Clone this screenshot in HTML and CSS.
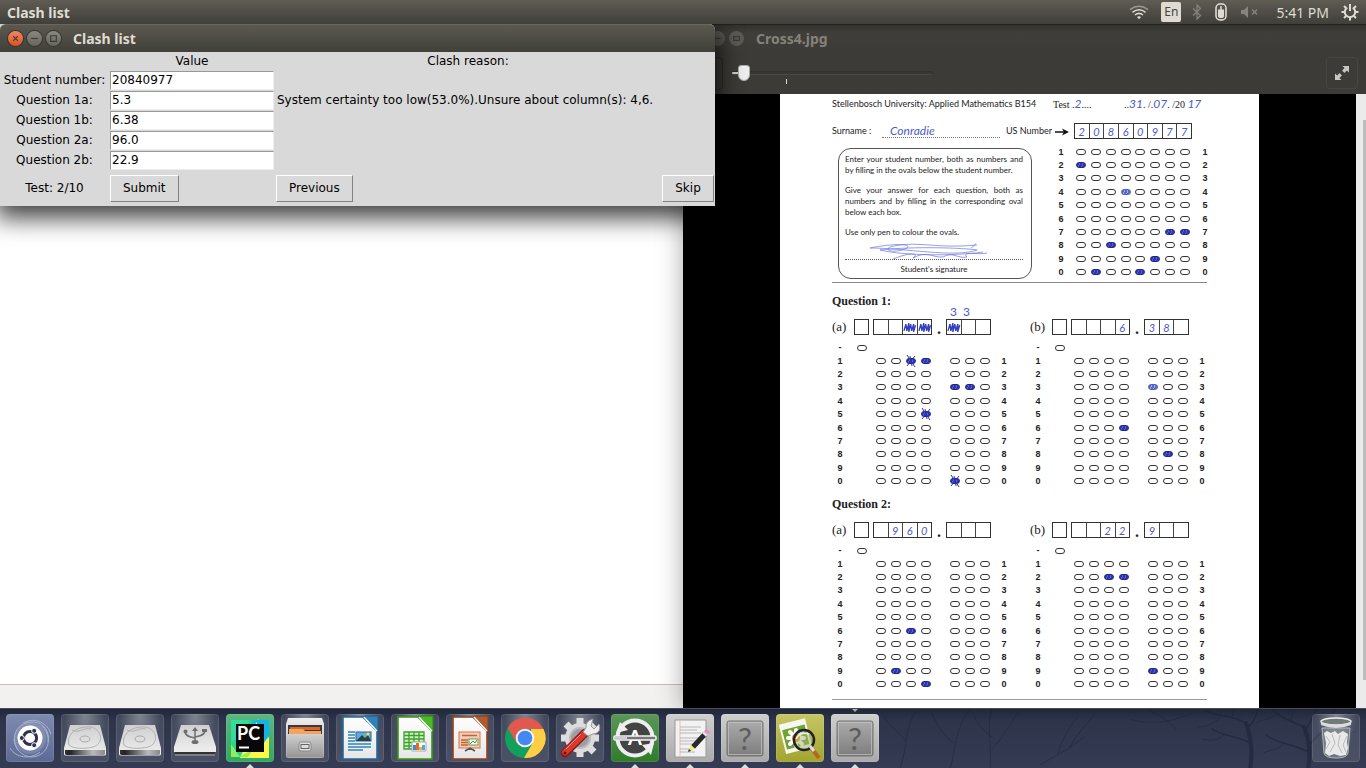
FILE: index.html
```
<!DOCTYPE html>
<html lang="en">
<head>
<meta charset="utf-8">
<title>Clash list</title>
<link rel="stylesheet" href="styles.css">
</head>
<body>
<header class="panel">
  <span class="panel-title">Clash list</span>
  <div class="indicators">
    <svg class="ind-wifi" width="20" height="16" viewBox="0 0 20 16" fill="none" stroke="#dfdbd2" stroke-width="1.5"><path d="M1 5.6Q10-1 19 5.6" stroke="#9b988f"/><path d="M3.5 8.3Q10 3.3 16.500 8.300M6 11Q10 7.700 14 11"/><path d="M8 13Q10 11.500 12 13L10 15.200Z" fill="#dfdbd2" stroke="none"/></svg>
    <span class="lang">En</span>
    <svg class="ind-bt" width="10" height="16" viewBox="0 0 10 16" fill="none" stroke="#85837b" stroke-width="1.3"><path d="M1 4.500L8.500 11.500L5 15V1L8.500 4.500L1 11.500"/></svg>
    <svg class="ind-mouse" width="12" height="18" viewBox="0 0 12 18"><rect x="1" y="1" width="10" height="16" rx="4" fill="#55534b" stroke="#e6e2da" stroke-width="1.500"/><path d="M3 6.500H9V13Q9 15 6 15T3 13Z" fill="#dfdbd2"/><path d="M6 3V7" stroke="#e6e2da" stroke-width="1.500"/></svg>
    <svg class="ind-vol" width="18" height="12" viewBox="0 0 18 12"><path d="M0 4h3l4-4v12L3 8H0Z" fill="#85837b"/><path d="M11 3.500l5 5M16 3.500l-5 5" stroke="#85837b" stroke-width="1.500"/></svg>
    <time class="clock">5:41 PM</time>
    <svg class="ind-gear" width="18" height="18" viewBox="-9 -9 18 18" fill="none" stroke="#dfdbd2"><path d="M-2.800-4.400A5.200 5.200 0 1 0 2.800-4.400" stroke-width="2"/><path d="M0-8V-1" stroke-width="2"/><path d="M5 0H8.500M-5 0H-8.500M0 5V8.500M3.700 3.700L6 6M-3.700 3.700L-6 6M4-4L6-6M-4-4L-6-6" stroke-width="2"/></svg>
  </div>
</header>

<main class="desktop">
  <section class="backdrop" aria-label="Editor"><div class="backdrop-page"></div><div class="backdrop-status"></div></section>

  <section class="viewer" aria-label="Image viewer">
    <div class="titlebar titlebar-idle">
      <button class="wbtn" aria-label="Close image"><svg viewBox="0 0 16 16"><path d="M5.500 5.500l5 5M10.500 5.500l-5 5"/></svg></button>
      <button class="wbtn" aria-label="Minimize image"><svg viewBox="0 0 16 16"><path d="M4.500 8h7"/></svg></button>
      <button class="wbtn" aria-label="Maximize image"><svg viewBox="0 0 16 16"><path d="M5 6h6v4H5z"/></svg></button>
      <h2>Cross4.jpg</h2>
    </div>
    <div class="toolbar">
      <button class="tool-btn" aria-label="Next"></button>
      <div class="zoom"><input type="range" min="0" max="100" value="3" aria-label="Zoom"></div>
      <button class="tool-btn expand" aria-label="Fullscreen"><svg width="14" height="14" viewBox="0 0 14 14" fill="#c9c6bd"><path d="M7.500 0H14V6.500L11.900 4.400L9.400 6.900L7.100 4.600L9.600 2.100ZM0 7.500V14H6.500L4.400 11.900L6.900 9.400L4.600 7.100L2.100 9.600Z"/></svg></button>
    </div>
    <div class="canvas">
      <article class="sheet">
        <div class="sheet-head">
          <span>Stellenbosch University: Applied Mathematics B154</span>
          <span class="roman">Test .<span class="ink">2</span>....</span>
          <span class="roman">..<span class="ink">31</span>. /.<span class="ink">07</span>. /20 <span class="ink">17</span></span>
        </div>
        <div class="sheet-id">
          <span>Surname :</span>
          <span class="surname"><span class="ink">Conradie</span></span>
          <span class="usnum">US Number <svg width="14" height="8" viewBox="0 0 14 8"><path d="M0 4h9" stroke="#111" stroke-width="1.500"/><path d="M7 0.500L14 4L7 7.500L9 4Z" fill="#111"/></svg></span>
          <div class="cells" data-cells="2,0,8,6,0,9,7,7"></div>
        </div>
        <div class="sheet-info">
          <div class="rules">
            <p>Enter your student number, both as numbers and by filling in the ovals below the student number.</p>
            <p>Give your answer for each question, both as numbers and by filling in the corresponding oval below each box.</p>
            <p>Use only pen to colour the ovals.</p>
            <div class="sign">
              <svg viewBox="0 0 178 20" fill="none" stroke="#6874dc" stroke-width="0.700"><path d="M25 8C55 2 70 5 60 9S38 11 45 7C70 0 90 9 132 5M25 8C60 8 110 18 132 10C120 8 70 6 35 10C60 16 110 16 138 12M48 19C65 12 75 13 68 18C82 10 88 18 98 17C108 11 112 19 122 17C116 11 132 15 142 13M126 8C131 5 130 3 131 4"/></svg>
            </div>
            <p class="sign-label">Student's signature</p>
          </div>
          <div class="ovals id-ovals" data-marks="2:0,4:3l,7:6,7:7,8:2,9:5,0:1,0:4"></div>
        </div>
        <section class="question">
          <h3>Question 1:</h3>
          <div class="parts">
            <div class="part" data-name="(a)" data-int=",,#,#" data-dec="#,," data-marks="1:2x,1:3,3:4,3:5,5:3x,0:4x" data-note="3  3"></div>
            <div class="part" data-name="(b)" data-int=",,,6" data-dec="3,8," data-marks="3:4l,6:3,8:5"></div>
          </div>
        </section>
        <section class="question">
          <h3>Question 2:</h3>
          <div class="parts">
            <div class="part" data-name="(a)" data-int=",9,6,0" data-dec=",," data-marks="6:2,9:1,0:3"></div>
            <div class="part" data-name="(b)" data-int=",,2,2" data-dec="9,," data-marks="2:2,2:3,9:4"></div>
          </div>
        </section>
      </article>
      <div class="scrolltrack"><div class="scrollthumb"></div></div>
    </div>
  </section>

  <form class="clash">
    <div class="titlebar">
      <button type="button" class="wbtn wbtn-close" aria-label="Close"><svg viewBox="0 0 16 16"><path d="M5.500 5.500l5 5M10.500 5.500l-5 5"/></svg></button>
      <button type="button" class="wbtn" aria-label="Minimize"><svg viewBox="0 0 16 16"><path d="M4.500 8h7"/></svg></button>
      <button type="button" class="wbtn" aria-label="Maximize"><svg viewBox="0 0 16 16"><path d="M5 5h6v6H5z"/></svg></button>
      <h1>Clash list</h1>
    </div>
    <div class="clash-grid">
      <span></span><span>Value</span><span>Clash reason:</span><span></span>
      <label for="sn">Student number:</label><input id="sn" type="text" value="20840977"><span></span><span></span>
      <label for="q1a">Question 1a:</label><input id="q1a" type="text" value="5.3"><span class="reason">System certainty too low(53.0%).Unsure about column(s): 4,6.</span><span></span>
      <label for="q1b">Question 1b:</label><input id="q1b" type="text" value="6.38"><span></span><span></span>
      <label for="q2a">Question 2a:</label><input id="q2a" type="text" value="96.0"><span></span><span></span>
      <label for="q2b">Question 2b:</label><input id="q2b" type="text" value="22.9"><span></span><span></span>
      <span>Test: 2/10</span><button type="button" class="tk">Submit</button><button type="button" class="tk">Previous</button><button type="button" class="tk">Skip</button>
    </div>
  </form>
</main>

<nav class="dock" aria-label="Launcher">
  <svg class="trees" viewBox="0 0 486 60" preserveAspectRatio="none" fill="none" stroke="#1d2336" stroke-linecap="round">
    <path stroke-width="4" d="M370 60C373 44 371 28 366 14M428 60C431 44 429 30 424 18"/>
    <path stroke-width="1.500" d="M366 14C352 6 340 8 326 2M367 20C374 12 376 8 378 0M424 18C410 12 400 8 392 0M429 36C440 22 452 16 470 4M425 22C430 14 434 8 436 0M370 34C356 26 344 28 332 20M430 44C412 34 400 36 386 26"/>
    <path stroke-width=".8" d="M20 60C28 36 24 20 36 2M26 32C18 22 10 18 4 8M70 60C76 40 74 22 90 0M74 34C62 26 56 14 52 4M110 60C112 36 106 16 112 0M112 40C124 28 130 14 138 4M112 28C100 20 96 12 94 6M160 56C180 44 190 40 204 28M178 45C182 30 190 16 198 8M190 38C196 26 206 16 214 6M250 10C270 16 290 14 312 4M268 0C280 8 290 12 296 20M340 8C336 14 326 18 318 18M344 26C338 32 330 32 322 30M396 5C388 12 382 10 376 14M404 34C398 42 390 40 384 44M444 22C452 28 464 28 476 22M451 16C450 10 454 6 454 0M410 12C414 6 412 4 414 0M352 7C354 4 352 2 354 0"/>
  </svg>
  <button class="tile t-dash" aria-label="Dash"><svg viewBox="0 0 48 48"><g fill="none" stroke="#a9b2cf" stroke-width="1"><path d="M12 36C3 22 12 7 28 8C38 9 44 18 42 28M36 12C48 24 42 42 26 43C16 43 8 34 8 25M17 9C30 2 42 10 45 20M34 38C24 46 10 44 4 34"/></g><circle cx="24" cy="24" r="16" fill="#a9b2cf" opacity=".3"/><circle cx="24" cy="24" r="12.500" fill="#fff"/><circle cx="24" cy="24" r="6.600" fill="none" stroke="#2b3250" stroke-width="3"/><g fill="#2b3250" stroke="#fff" stroke-width="1"><circle cx="15.800" cy="24" r="2.500"/><circle cx="28.200" cy="16.800" r="2.500"/><circle cx="28.200" cy="31.200" r="2.500"/></g></svg></button>
  <button class="tile" aria-label="Drive"><svg viewBox="0 0 48 48"><g id="drive"><path d="M9 11H39L45 34V40Q45 41.500 43 41.500H5Q3 41.500 3 40V34Z" fill="url(#metal)"/><path d="M4 36H44V39.500Q44 41 42 41H6Q4 41 4 39.500Z" fill="url(#front)"/><path d="M8 31C5 20 16 12 29 13C42 15 43 30 32 33C24 35 12 35 8 31ZM11 16C18 20 22 13 30 15" fill="none" stroke="#b2b2b2"/><ellipse cx="24" cy="25" rx="5" ry="3" fill="#ddd" stroke="#aaa"/></g></svg></button>
  <button class="tile" aria-label="Drive 2"><svg viewBox="0 0 48 48"><use href="#drive"/></svg></button>
  <button class="tile" aria-label="USB drive"><svg viewBox="0 0 48 48"><path d="M10 11H38L45 33V37H3V33Z" fill="url(#metal)"/><path d="M3 33H45V38H3Z" fill="#ececec"/><path d="M4 39H44" stroke="#333" stroke-width="2"/><path d="M4 41H44" stroke="#aaa"/><path d="M24 15V28M14 18C15 23 20 23 24 24M34 17C33 22 28 22 24 23" fill="none" stroke="#6d6d6d" stroke-width="1.500"/><ellipse cx="24" cy="28" rx="3.500" ry="2" fill="#6d6d6d"/><path d="M21 17L24 13L27 17ZM31 15H36V18H31Z" fill="#6d6d6d"/><circle cx="14.500" cy="17.500" r="2" fill="#6d6d6d"/></svg></button>
  <button class="tile t-pc run" aria-label="PyCharm"><svg viewBox="0 0 48 48"><path d="M5 6H26L20 44L5 42Z" fill="#21d789"/><path d="M26 6H43V30L30 20Z" fill="#16bdd8"/><path d="M43 24V44H14L32 5Z" fill="#fcf84a"/><path d="M5 6H24L14 20L5 30Z" fill="#35dd98"/><path d="M30 6H43V22L37 30Z" fill="#12b3e8"/><path d="M14 43L28 34L22 43ZM5 30L14 43H5Z" fill="#8eee60"/><rect x="10" y="10" width="28" height="28" fill="#080808"/><text x="11" y="26" class="pc-text">PC</text><path d="M13 33.500H23" stroke="#fff" stroke-width="2"/></svg></button>
  <button class="tile" aria-label="Files"><svg viewBox="0 0 48 48"><path d="M7 4H41L43 10V42Q43 44 41 44H7Q5 44 5 42V10Z" fill="url(#cab)"/><path d="M7 11H41V22H7Z" fill="#3c3a39"/><path d="M9 13H39V16H9Z" fill="#d9662a"/><path d="M8 15H22L24 17H40V21H8Z" fill="#f3a45c"/><path d="M6 20H42V43H6Z" fill="url(#cab2)"/><rect x="18" y="28" width="12" height="9" rx="2" fill="#ddd" stroke="#888"/><rect x="20" y="30.500" width="8" height="4" fill="#ddd" stroke="#666"/></svg></button>
  <button class="tile" aria-label="Writer"><svg viewBox="0 0 48 48"><path d="M7 3H27L41 17V45H7Z" fill="url(#paper)" stroke="#1d6ba3" stroke-width="1.600"/><path d="M28 2H42V17Z" fill="#2e83b8" stroke="#1b5f92"/><path d="M28 3L41 17" stroke="#fff" stroke-width="1.500"/><path d="M12 18H19M12 21H19M12 24H19M12 27H19M12 30H35M12 33H35M12 36H27" stroke="#2f85be" stroke-width="1.500"/><rect x="20" y="18" width="15" height="9" fill="#68a9d9" stroke="#2569a0"/><path d="M20 27L26 21L29 24L32 21L35 27Z" fill="#29443c"/><circle cx="32" cy="20" r="1.500" fill="#ffe12e"/></svg></button>
  <button class="tile" aria-label="Calc"><svg viewBox="0 0 48 48"><path d="M7 3H27L41 17V45H7Z" fill="url(#paper)" stroke="#349a16" stroke-width="1.600"/><path d="M28 2H42V17Z" fill="#4bb824" stroke="#238b11"/><path d="M28 3L41 17" stroke="#fff" stroke-width="1.500"/><path d="M13 18H33V35H13ZM13 21.500H33M13 25H33M13 28.500H33M13 32H33M18 18V35M23 18V35M28 18V35" fill="#d4f0ce" stroke="#3aa325" stroke-width="1.300"/><path d="M21 28H35V37H21Z" fill="#fff" stroke="#aaa"/><path d="M22 31h3v5h-3z" fill="#418bd4"/><path d="M25 29h3v7h-3z" fill="#e66d28"/><path d="M28 33h3v3h-3z" fill="#e3bb29"/><path d="M31 31h3v5h-3z" fill="#56a6dc"/></svg></button>
  <button class="tile" aria-label="Impress"><svg viewBox="0 0 48 48"><path d="M7 3H27L41 17V45H7Z" fill="url(#paper)" stroke="#94421c" stroke-width="1.600"/><path d="M28 2H42V17Z" fill="#ae5b2e" stroke="#8a3e17"/><path d="M28 3L41 17" stroke="#fff" stroke-width="1.500"/><rect x="13" y="18" width="21" height="16" fill="#f7cdb7" stroke="#d2744b"/><path d="M16 21.500H31M15 26H22M15 28.500H22M15 31H22" stroke="#bd633b" stroke-width="1.300"/><rect x="23" y="25" width="9" height="6" fill="#fff" stroke="#6b9b44"/><path d="M24 30L27 27L29 29L31 26" fill="none" stroke="#389935"/><path d="M24 34V36M19 37L24 34L29 37" fill="none" stroke="#555" stroke-width="1.500"/></svg></button>
  <button class="tile" aria-label="Chrome"><svg viewBox="0 0 48 48"><circle cx="24" cy="24" r="20" fill="#12a05f"/><path d="M6.700 14L15.500 29L24 15H42.500A20 20 0 0 0 6.700 14Z" fill="#e0584e"/><path d="M42.500 15A20 20 0 0 1 23 44L32 28.500L30 15Z" fill="#ffce45"/><circle cx="24" cy="24" r="9.300" fill="#f3f3f3"/><circle cx="24" cy="24" r="7.300" fill="#4488f4"/></svg></button>
  <button class="tile" aria-label="System settings"><svg viewBox="0 0 48 48"><g stroke="#dedede" stroke-width="7"><path d="M24 4V43M5 24H43M10 10L38 38M38 10L10 38"/></g><circle cx="24" cy="24" r="15" fill="#dcdcdc"/><circle cx="24" cy="24" r="10" fill="#999fa8" stroke="#bbb" stroke-width="2"/><path d="M9 39L29 19" stroke="#8f130d" stroke-width="8.500" stroke-linecap="round"/><path d="M9 38.500L29 19" stroke="#d83a31" stroke-width="6" stroke-linecap="round"/><path d="M10 35L25 20" stroke="#f28c83" stroke-width="1"/><path d="M27 18L30 14Q29 7 37 5L35 12L38 15L43 10Q46 19 37 20L32 22Z" fill="#eee" stroke="#999"/><circle cx="9" cy="39" r="1.500" fill="#64140f"/></svg></button>
  <button class="tile t-green run" aria-label="Software updater"><svg viewBox="0 0 48 48"><circle cx="24" cy="24" r="17.500" fill="#444" stroke="#eee" stroke-width="4"/><text x="24" y="31" class="a-text">A</text><path d="M5 19L9 8L17 16ZM31 31L43 29L40 41Z" fill="#eee"/><rect x="3" y="22" width="42" height="4" rx="1" fill="#777" stroke="#f5f5f5" stroke-width="1.500"/><path d="M4 24H16" stroke="#ccc" stroke-width="3"/></svg></button>
  <button class="tile t-grey run" aria-label="Text editor"><svg viewBox="0 0 48 48"><path d="M9 6H40V43H9Z" fill="#f2f2f2" stroke="#999"/><path d="M14 6V43" stroke="#efb8b8"/><path d="M14 13H35M14 16H31M14 19H35M14 24H33M14 27H35M14 30H33M14 35H27M14 38H29" stroke="#aaa" stroke-width=".8"/><path d="M27 33L39 20" stroke="#282828" stroke-width="5"/><path d="M38 21L41 17.500" stroke="#ddd" stroke-width="5"/><path d="M40 19L42 16.500" stroke="#e48bbf" stroke-width="5"/><path d="M22 38L25 31L29 35Z" fill="#f3e67b"/><path d="M22 38L23 35L25 36.800Z" fill="#222"/></svg></button>
  <button class="tile t-grey run" aria-label="Unknown application"><svg viewBox="0 0 48 48"><rect x="6" y="7" width="36" height="35" rx="2" fill="url(#unk)" stroke="#737373"/><rect x="7.500" y="8.500" width="33" height="32" fill="none" stroke="#c4c4c4" stroke-width=".7"/><text x="24" y="36" class="q-text">?</text></svg></button>
  <button class="tile t-olive run" aria-label="Image viewer"><svg viewBox="0 0 48 48"><g transform="rotate(-14 20 22)"><rect x="6" y="7" width="27" height="30" fill="#f7f7ef"/><rect x="8" y="13" width="23" height="20" fill="#6fa332"/></g><g fill="none" stroke="#fff" stroke-width="4" stroke-linecap="round"><path d="M12 24H28M20 16V32M14 18L26 30M26 18L14 30"/></g><circle cx="20" cy="24" r="4" fill="#f09426"/><circle cx="28" cy="26" r="10" fill="#a3b36e" fill-opacity=".5" stroke="#222" stroke-width="2.500"/><path d="M20 25Q24 17 33 20" stroke="#eee" fill="none" stroke-width="1.500"/><path d="M36 35L43 44" stroke="#b56822" stroke-width="4"/><path d="M34 32L38 37" stroke="#ddd" stroke-width="3"/></svg></button>
  <button class="tile t-grey run run-top" aria-label="Unknown application 2"><svg viewBox="0 0 48 48"><rect x="6" y="7" width="36" height="35" rx="2" fill="url(#unk)" stroke="#737373"/><rect x="7.500" y="8.500" width="33" height="32" fill="none" stroke="#c4c4c4" stroke-width=".7"/><text x="24" y="36" class="q-text">?</text></svg></button>
  <button class="tile tile-trash" aria-label="Trash"><svg viewBox="0 0 48 48"><path d="M10 14H38L36 39Q35 44 24 44T12 39Z" fill="#aeb5b3" fill-opacity=".35" stroke="#b4b9ba"/><path d="M12 19L15 17L19 19L23 17L26 20L31 17L36 20L35 28L36 34L34 41L28 42L22 40L17 42L13 39L14 29Z" fill="#e9e9e9"/><path d="M14 22L18 28L14 35M20 20L23 29L18 38M28 21L26 31L30 39M35 22L31 31L34 38" fill="none" stroke="#b8bbba"/><ellipse cx="24" cy="7.500" rx="15" ry="3.500" fill="#717a7a" stroke="#eee" stroke-width="1.500"/><path d="M9 8Q24 14 39 8V11Q24 17 9 11Z" fill="#d8dcda"/></svg></button>
  <svg width="0" height="0" class="defs"><defs>
    <linearGradient id="metal" x2="0" y2="1"><stop stop-color="#cfcfcf"/><stop offset="1" stop-color="#efefef"/></linearGradient>
    <linearGradient id="front"><stop stop-color="#333"/><stop offset=".12" stop-color="#222"/><stop offset=".7" stop-color="#bbb"/><stop offset="1" stop-color="#888"/></linearGradient>
    <linearGradient id="cab" x2="0" y2="1"><stop stop-color="#eee"/><stop offset="1" stop-color="#aaa"/></linearGradient>
    <linearGradient id="cab2" x2="0" y2="1"><stop stop-color="#d0d0d0"/><stop offset="1" stop-color="#969696"/></linearGradient>
    <linearGradient id="paper" x2="0" y2="1"><stop stop-color="#fff"/><stop offset="1" stop-color="#e6e6e6"/></linearGradient>
    <linearGradient id="unk" x2="0" y2="1"><stop stop-color="#ababab"/><stop offset="1" stop-color="#7d7d7d"/></linearGradient>
  </defs></svg>
</nav>
<script src="sheet.js"></script>
</body>
</html>
```
FILE: sheet.js
```
const DIGITS = ['1', '2', '3', '4', '5', '6', '7', '8', '9', '0'];
const SCRIBBLE = '<svg class="scribble" viewBox="0 0 14 14"><path d="M1 11L3 4L4 11L6 3L6 12L8 4L9 11L11 4L11 12L13 5"/></svg>';
const CROSS = '<svg class="cross" viewBox="0 0 14 14"><path d="M3 1L11 13M11 2L3 12M6 2L8 12"/></svg>';

function cells(list) {
  return list.split(',').map(v => `<span class="cell">${v === '#' ? SCRIBBLE : v}</span>`).join('');
}

function ovalRows(groups, marks) {
  const kinds = {};
  marks.split(',').forEach(m => {
    const [, digit, col, kind] = m.match(/(\d):(\d)(\w?)/);
    kinds[digit + ':' + col] = kind || 'f';
  });
  return DIGITS.map(d => {
    let col = 0;
    const body = groups.map(n => {
      let out = '';
      for (let i = 0; i < n; i++, col++) {
        const kind = kinds[d + ':' + col];
        out += `<span class="slot"><i class="oval${kind ? ' inked ' + kind : ''}"></i>${kind === 'x' ? CROSS : ''}</span>`;
      }
      return `<span class="slots">${out}</span>`;
    }).join('');
    return `<div class="row"><b>${d}</b>${body}<b>${d}</b></div>`;
  }).join('');
}

document.querySelectorAll('.sheet-id .cells').forEach(el => { el.innerHTML = cells(el.dataset.cells); });
document.querySelectorAll('.id-ovals').forEach(el => { el.innerHTML = ovalRows([8], el.dataset.marks); });
document.querySelectorAll('.part').forEach(el => {
  const d = el.dataset;
  el.innerHTML = `
    <div class="answer"><span class="part-name">${d.name}</span>
      <div class="cells">${cells('')}</div>
      <div class="cells whole">${cells(d.int)}</div>
      <span class="point">.</span>
      <div class="cells">${cells(d.dec)}${d.note ? `<span class="note">${d.note}</span>` : ''}</div></div>
    <div class="minus"><b>-</b><span class="slot"><i class="oval"></i></span></div>
    <div class="ovals">${ovalRows([4, 3], d.marks)}</div>`;
});
```
FILE: styles.css
```
* { box-sizing: border-box; }
html, body { height: 100%; }
body {
  margin: 0;
  display: flex;
  flex-direction: column;
  overflow: hidden;
  font: 12px "DejaVu Sans", sans-serif;
  color: #000;
}
button { font: inherit; padding: 0; border: 0; }
h1, h2, h3, p { margin: 0; }

/* Top panel */
.panel {
  flex: none;
  height: 24px;
  display: flex;
  align-items: center;
  justify-content: space-between;
  padding: 0 7px;
  background: linear-gradient(#5f5d53, #55534b 30%, #403f39);
  color: #dfdbd2;
  font: 14px "Noto Sans", sans-serif;
}
.panel-title { font-weight: 700; }
.indicators { display: flex; align-items: center; }
.lang {
  width: 20px;
  height: 20px;
  margin: 0 11px 0 12px;
  border-radius: 2px;
  background: #dfdbd2;
  color: #45443d;
  font: 12px/20px "Noto Sans", sans-serif;
  text-align: center;
}
.ind-mouse { margin: 0 14px 0 13px; }
.ind-vol { margin-right: 17px; }
.clock { margin-right: 12px; }

/* Desktop windows */
.desktop { flex: 1; min-height: 0; display: flex; position: relative; overflow: hidden; }
.backdrop { flex: 1 1 50%; display: flex; flex-direction: column; background: #fff; }
.backdrop-page { flex: 1; }
.backdrop-status { height: 24px; background: #f2f1f0; border-top: 1px solid #c9bfb9; }
.viewer {
  flex: 1 1 50%;
  min-width: 0;
  display: flex;
  flex-direction: column;
  background: #3c3b37;
  box-shadow: 0 0 24px rgba(0, 0, 0, .35);
}
.titlebar {
  flex: none;
  display: flex;
  align-items: center;
  gap: 4px;
  height: 28px;
  padding-left: 8px;
  border-radius: 6px 6px 0 0;
  border-top: 1px solid #69675c;
  background: linear-gradient(#5b594f, #403f39);
  color: #dfdbd2;
  font-family: "Noto Sans", sans-serif;
}
.titlebar h1, .titlebar h2 { margin-left: 8px; font-size: 14px; line-height: 20px; }
.titlebar-idle { background: linear-gradient(#32312e, #3f3e3a 30%, #3c3b37); border-top-color: #24231f; color: #85827b; border-radius: 0; }
.wbtn { width: 15px; height: 15px; border-radius: 50%; background: linear-gradient(#8a8880, #66645c); box-shadow: 0 0 0 1px #35342f; }
.wbtn svg { display: block; fill: none; stroke: #3b3a35; stroke-width: 1.2px; }
.wbtn-close { background: linear-gradient(#f08763, #e2501f); }
.titlebar-idle .wbtn { background: #5b5a54; box-shadow: none; }

.toolbar { flex: none; height: 42px; display: flex; align-items: center; padding: 0 8px 0 5px; }
.tool-btn { width: 35px; height: 33px; border: 1px solid #2e2d2a; border-radius: 4px; background: #3c3b37; }
.expand { width: 32px; height: 32px; margin-left: auto; border-color: #474641; }
.expand svg { display: block; margin: auto; }
.zoom { position: relative; width: 202px; margin-left: 8px; }
.zoom::after { content: ""; position: absolute; left: 55px; top: 15px; width: 1px; height: 5px; background: #dedad2; }
.zoom input { display: block; width: 100%; height: 18px; margin: 0; background: none; appearance: none; }
.zoom input::-webkit-slider-runnable-track {
  height: 4px;
  border-radius: 2px;
  border: 1px solid #32312d;
  border-bottom-color: #4a4944;
  background: linear-gradient(90deg, #ccc 8px, #383733 8px);
}
.zoom input::-webkit-slider-thumb {
  appearance: none;
  width: 12px;
  height: 16px;
  margin-top: -7px;
  border-radius: 3px 3px 6px 6px;
  border: 1px solid #aaa;
  background: #eee;
}

.canvas { flex: 1; min-height: 0; display: flex; background: #000; overflow: hidden; }
.scrolltrack { flex: none; width: 10px; padding: 26px 0 28px 7px; background: #ebebeb; }
.scrollthumb { height: 100%; background: #bdbdbd; }

/* Scanned answer sheet */
.sheet {
  flex: none;
  width: 479px;
  margin: 0 auto;
  padding: 4px 52px 0;
  background: #fff;
  color: #222;
  font: 9px/12px Lato, sans-serif;
  white-space: nowrap;
}
.roman { font-family: "Liberation Serif", serif; font-size: 10px; }
.ink { color: #4a5ac8; font: italic 12px/12px Lato, sans-serif; }
.sheet-head { display: grid; grid-template-columns: 221px 71px auto; height: 12px; }
.sheet-id { display: grid; grid-template-columns: 50px 124px 68px 118px; align-items: center; margin-top: 13px; }
.surname { margin-right: 6px; padding-left: 8px; border-bottom: 1px dotted #777; line-height: 10px; }
.usnum svg { vertical-align: middle; margin-left: 1px; }
.cells { position: relative; display: flex; height: 16px; border: 1px solid #333; }
.cell { flex: 1; height: 14px; color: #4a5ac8; font: italic 11px/15px Lato, sans-serif; text-align: center; }
.cell + .cell { border-left: 1px solid #444; }
.scribble { display: block; width: 100%; height: 14px; fill: none; stroke: #343fc0; stroke-width: 1.4px; }
.note { position: absolute; left: 3px; top: -14px; color: #4a5ac8; font: 12px/12px Lato, sans-serif; white-space: pre; }

.sheet-info { display: flex; justify-content: space-between; margin-top: 6px; padding: 0 0 3px 6px; border-bottom: 1px solid #888; }
.rules { width: 194px; height: 131px; margin-top: 3px; padding: 5px 8px 0 6px; border: 1px solid #555; border-radius: 13px; font-size: 8px; line-height: 11px; white-space: normal; text-align: justify; }
.rules p + p { margin-top: 9px; }
.sign { height: 20px; margin-top: 2px; border-bottom: 1px dotted #555; }
.sign svg { display: block; width: 100%; height: 20px; overflow: visible; }
.rules .sign-label { margin-top: 4px; text-align: center; }

.ovals { display: grid; grid-template-rows: repeat(10, 1fr); height: 134px; }
.row { display: grid; align-items: center; }
.row b, .minus b { font: bold 9px/12px "Liberation Sans", sans-serif; text-align: center; }
.id-ovals .row { grid-template-columns: 16px 118px 16px; column-gap: 5px; margin-right: -6px; }
.slots { display: flex; }
.slot { position: relative; flex: 1; display: flex; justify-content: center; align-items: center; }
.oval { width: 10px; height: 6px; border: 1px solid #333; border-radius: 3px; }
.inked { background: repeating-linear-gradient(105deg, #2c35b4 0 2px, #5660dc 2px 3px); border-color: #20267a; }
.inked.l { background: repeating-linear-gradient(105deg, #5a66cf 0 2px, #a4acf0 2px 3px); border-color: #5560a8; }
.cross { position: absolute; width: 14px; height: 14px; fill: none; stroke: #2a32a8; stroke-width: 1px; }

.question { padding-top: 12px; }
.question + .question { padding-top: 10px; }
.question h3 { font: bold 12px/12px "Liberation Serif", serif; }
.parts { display: grid; grid-template-columns: 198px auto; margin-top: 12px; }
.answer { display: grid; grid-template-columns: 22px 15px 63px 14px 45px; height: 16px; }
.whole { margin-left: 4px; }
.part-name { font: 13px/16px "Liberation Serif", serif; }
.point { font: bold 16px/20px "Liberation Serif", serif; text-align: center; }
.minus { display: grid; grid-template-columns: 16px 15px; column-gap: 6px; height: 13px; margin-top: 6px; }
.part .row { grid-template-columns: 16px 59px 45px 16px; justify-content: start; }
.part .row > :nth-child(2) { margin-left: 26px; margin-right: -26px; }
.part .row > :nth-child(3) { margin-left: 40px; margin-right: -40px; }
.part .row > :nth-child(4) { margin-left: 44px; margin-right: -44px; }
.sheet > .question:last-child { padding-bottom: 8px; border-bottom: 1px solid #999; align-self: start; }

/* Clash dialog */
.clash { position: absolute; left: 0; top: 0; background: #d9d9d9; border-radius: 6px 6px 0 0; box-shadow: 0 8px 24px 4px rgba(0, 0, 0, .75); }
.clash-grid {
  display: grid;
  grid-template-columns: 107px 164px 384px 52px;
  grid-template-rows: 18px repeat(5, 20px) 36px;
  align-items: center;
  justify-items: center;
  column-gap: 2px;
  padding: 0 1px;
  line-height: 16px;
  white-space: nowrap;
}
.clash-grid input {
  width: 100%;
  height: 19px;
  padding: 0 1px;
  border: 1px solid;
  border-color: #999 #eee #eee #999;
  background: #fff;
  font: inherit;
  color: #000;
}
.clash-grid .reason { justify-self: start; padding-left: 1px; }
.tk { justify-self: start; min-width: 52px; height: 27px; padding: 0 12px; border: 1px solid; border-color: #fff #828282 #828282 #fff; background: #d9d9d9; color: #000; }

/* Launcher */
.dock {
  position: relative;
  flex: none;
  display: flex;
  gap: 7px;
  height: 60px;
  padding: 5px 6px 0;
  border-top: 1px solid #484c54;
  background: linear-gradient(#20273a, #2e354b 20%, #343b52);
}
.trees { position: absolute; right: 0; top: 0; width: calc(100% - 880px); height: 60px; opacity: .6; }
.defs { position: absolute; }
.tile {
  position: relative;
  flex: none;
  width: 48px;
  height: 48px;
  border-radius: 4px;
  background: radial-gradient(ellipse at 50% 0, rgba(255, 255, 255, .34), rgba(255, 255, 255, .02) 60%), rgba(255, 255, 255, .1);
  box-shadow: inset 0 0 0 1px rgba(255, 255, 255, .1);
}
.tile svg { display: block; width: 48px; height: 48px; }
.t-dash { background: linear-gradient(#7f8aae, #5c6a94); }
.t-pc { background: linear-gradient(#5cb683, #30a95f); }
.t-green { background: linear-gradient(#5c9659, #2f7c2a); }
.t-grey { background: linear-gradient(#cfcfcf, #aaa); }
.t-olive { background: linear-gradient(#c5c665, #a2a42f); }
.tile-trash { margin-left: auto; }
.run::after { content: ""; position: absolute; left: 20px; bottom: -6px; border: 4px solid transparent; border-top: 0; border-bottom-color: #ddd; }
.run-top::before { content: ""; position: absolute; left: 21px; top: -5px; border: 3px solid transparent; border-bottom: 0; border-top-color: #aaa; }
.pc-text { font: bold 18px Lato, sans-serif; fill: #fff; }
.a-text { font: bold 20px Lato, sans-serif; fill: #fff; text-anchor: middle; }
.q-text { font: 31px Lato, sans-serif; fill: #5d5d5d; text-anchor: middle; }
```
